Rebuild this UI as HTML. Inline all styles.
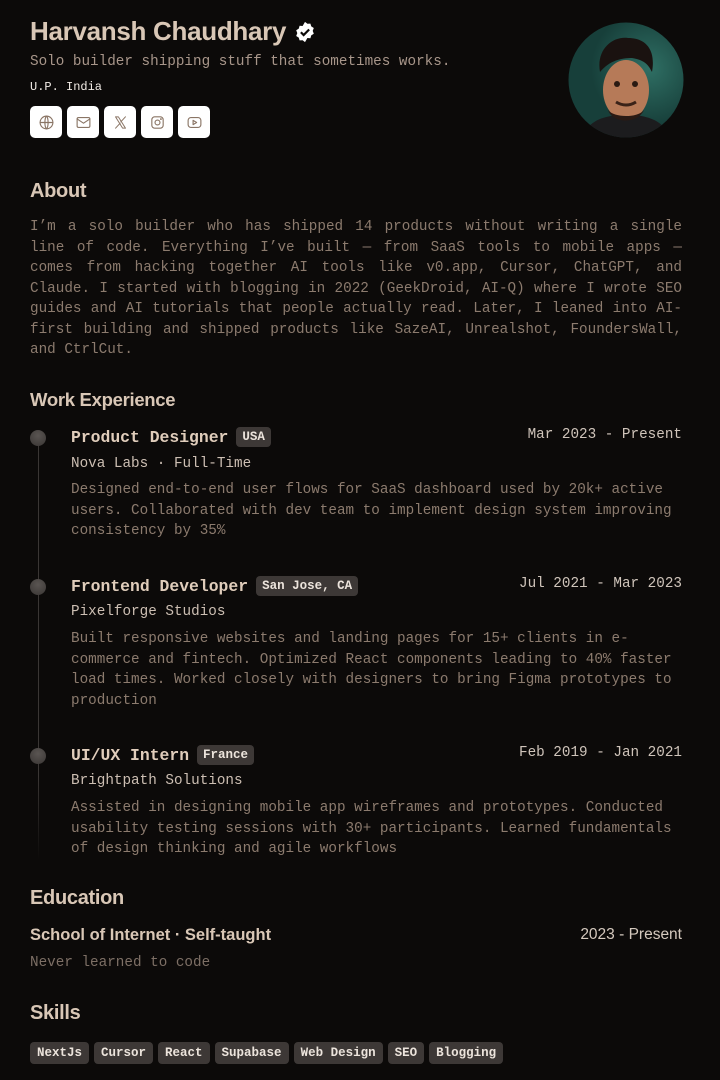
<!DOCTYPE html>
<html><head><meta charset="utf-8"><style>
*{margin:0;padding:0;box-sizing:border-box}
body{width:720px;height:1080px;background:#0c0a09;position:relative;overflow:hidden;font-family:"Liberation Mono",monospace;color:#8c7b6e}
.a{position:absolute}
.sans{font-family:"Liberation Sans",sans-serif}
h2{position:absolute;left:30px;font-family:"Liberation Sans",sans-serif;font-weight:bold;font-size:20px;color:#d9c7b6;letter-spacing:-0.3px}
.ic{position:absolute;top:106px;width:32px;height:32px;background:#fff;border-radius:5px;display:flex;align-items:center;justify-content:center}
.ic svg{width:17px;height:17px;fill:none;stroke:#8a7565;stroke-width:1.6;stroke-linecap:round;stroke-linejoin:round}
.p{position:absolute;left:30px;width:652px;font-size:14.3px;line-height:20.5px;color:#8c7b6e}
.p span{display:block;text-align:justify;text-align-last:justify;white-space:nowrap}
.p span.l{text-align-last:left}
.dot{position:absolute;left:30px;width:16px;height:16px;border-radius:50%;background:radial-gradient(circle at 50% 35%,#5a5552,#3a3634)}
.t{position:absolute;left:71px;font-weight:bold;font-size:16.4px;color:#e0cdbb;display:flex;align-items:center;gap:8px}
.b{font-size:12.5px;font-weight:bold;background:#3d3836;color:#ece4dc;padding:3px 6px;border-radius:4px}
.d{position:absolute;right:38px;font-size:14.3px;color:#cfc4ba}
.s{position:absolute;left:71px;font-size:14.3px;color:#cdbfb3}
.ds{position:absolute;left:71px;width:605px;font-size:14.3px;line-height:20.6px;color:#8c7b6e}
.sk{display:inline-block;font-size:12.5px;font-weight:bold;background:#3d3836;color:#ece4dc;padding:3px 7px;border-radius:4px;margin-right:5px;height:22px;line-height:16px}
</style></head><body>
<div class="a sans" style="left:30px;top:16px;font-size:26px;font-weight:bold;color:#d9c7b6;letter-spacing:-0.3px;display:flex;align-items:center;gap:8px">Harvansh Chaudhary
<svg width="22" height="22" viewBox="0 0 24 24"><path fill="#fff" d="M12 1l2.6 2 3.3-.2.9 3.1 2.8 1.8-1.2 3.1 1.2 3.1-2.8 1.8-.9 3.1-3.3-.2L12 23l-2.6-2-3.3.2-.9-3.1-2.8-1.8 1.2-3.1-1.2-3.1 2.8-1.8.9-3.1 3.3.2z"/><path d="M7.5 12.3l3 3 6-6" stroke="#0c0a09" stroke-width="2.4" fill="none"/></svg></div>
<div class="a" style="left:30px;top:54px;font-size:14.3px;color:#a8968a">Solo builder shipping stuff that sometimes works.</div>
<div class="a" style="left:30px;top:80px;font-size:12px;color:#f2ece6">U.P. India</div>
<div class="ic" style="left:30px"><svg viewBox="0 0 24 24"><circle cx="12" cy="12" r="9"/><path d="M3 12h18M12 3c3 3 3 15 0 18M12 3c-3 3-3 15 0 18"/></svg></div>
<div class="ic" style="left:67px"><svg viewBox="0 0 24 24"><rect x="3" y="5" width="18" height="14" rx="2"/><path d="M3 7l9 6 9-6"/></svg></div>
<div class="ic" style="left:104px"><svg viewBox="0 0 24 24" style="stroke-width:1.4"><path d="M5 4h4l10 16h-4zM19 4l-6.5 7M5 20l6.5-7"/></svg></div>
<div class="ic" style="left:141px"><svg viewBox="0 0 24 24"><rect x="4" y="4" width="16" height="16" rx="4"/><circle cx="12" cy="12" r="3.5"/><circle cx="16.8" cy="7.2" r=".5"/></svg></div>
<div class="ic" style="left:178px"><svg viewBox="0 0 24 24"><rect x="3" y="5" width="18" height="14" rx="4"/><path d="M10 9l5 3-5 3z"/></svg></div>
<svg class="a" style="left:568px;top:22px" width="116" height="116" viewBox="0 0 116 116">
<defs><clipPath id="c"><circle cx="58" cy="58" r="57.5"/></clipPath><radialGradient id="g" cx="70%" cy="40%"><stop offset="0" stop-color="#2f6f64"/><stop offset="1" stop-color="#173f3a"/></radialGradient></defs>
<g clip-path="url(#c)"><rect width="116" height="116" fill="url(#g)"/>
<path d="M15 116c5-18 20-22 43-24 23 2 38 6 43 24z" fill="#1c1c1e"/>
<ellipse cx="58" cy="68" rx="23" ry="30" fill="#b67a58"/>
<path d="M40 88c5 14 30 14 36 0-6 8-30 8-36 0z" fill="#2a1a14"/>
<path d="M32 50c-4-22 12-36 28-34 18 0 28 12 24 34-4-8-8-12-20-14-10 0-22 2-32 14z" fill="#1a1210"/>
<circle cx="49" cy="62" r="3" fill="#2a1a12"/><circle cx="67" cy="62" r="3" fill="#2a1a12"/>
<path d="M48 80q10 6 20 0" stroke="#3a2218" stroke-width="3" fill="none"/></g></svg>

<h2 style="top:180px">About</h2>
<div class="p" style="top:217px"><span>I’m a solo builder who has shipped 14 products without writing a single</span><span>line of code. Everything I’ve built — from SaaS tools to mobile apps —</span><span>comes from hacking together AI tools like v0.app, Cursor, ChatGPT, and</span><span>Claude. I started with blogging in 2022 (GeekDroid, AI-Q) where I wrote SEO</span><span>guides and AI tutorials that people actually read. Later, I leaned into AI-</span><span>first building and shipped products like SazeAI, Unrealshot, FoundersWall,</span><span class="l">and CtrlCut.</span></div>

<h2 style="top:389px;font-size:18.5px">Work Experience</h2>
<div class="a" style="left:37.5px;top:440px;width:1px;height:420px;background:linear-gradient(#3a3634 80%,#0c0a09)"></div>

<div class="dot" style="top:430px"></div>
<div class="t" style="top:427px">Product Designer <span class="b">USA</span></div>
<div class="d" style="top:427px">Mar 2023 - Present</div>
<div class="s" style="top:456px">Nova Labs · Full-Time</div>
<div class="ds" style="top:480px">Designed end-to-end user flows for SaaS dashboard used by 20k+ active users. Collaborated with dev team to implement design system improving consistency by 35%</div>

<div class="dot" style="top:579px"></div>
<div class="t" style="top:576px">Frontend Developer <span class="b">San Jose, CA</span></div>
<div class="d" style="top:576px">Jul 2021 - Mar 2023</div>
<div class="s" style="top:604px">Pixelforge Studios</div>
<div class="ds" style="top:629px">Built responsive websites and landing pages for 15+ clients in e-commerce and fintech. Optimized React components leading to 40% faster load times. Worked closely with designers to bring Figma prototypes to production</div>

<div class="dot" style="top:748px"></div>
<div class="t" style="top:745px">UI/UX Intern <span class="b">France</span></div>
<div class="d" style="top:745px">Feb 2019 - Jan 2021</div>
<div class="s" style="top:773px">Brightpath Solutions</div>
<div class="ds" style="top:798px">Assisted in designing mobile app wireframes and prototypes. Conducted usability testing sessions with 30+ participants. Learned fundamentals of design thinking and agile workflows</div>

<h2 style="top:887px">Education</h2>
<div class="a sans" style="left:30px;top:926px;font-size:16.5px;font-weight:bold;color:#d9c7b6">School of Internet · Self-taught</div>
<div class="a sans" style="right:38px;top:926px;font-size:15.5px;color:#d5c9be">2023 - Present</div>
<div class="a" style="left:30px;top:955px;font-size:14.3px;color:#7d6f65">Never learned to code</div>

<h2 style="top:1002px">Skills</h2>
<div class="a" style="left:30px;top:1042px;white-space:nowrap"><span class="sk">NextJs</span><span class="sk">Cursor</span><span class="sk">React</span><span class="sk">Supabase</span><span class="sk">Web Design</span><span class="sk">SEO</span><span class="sk">Blogging</span></div>
</body></html>
